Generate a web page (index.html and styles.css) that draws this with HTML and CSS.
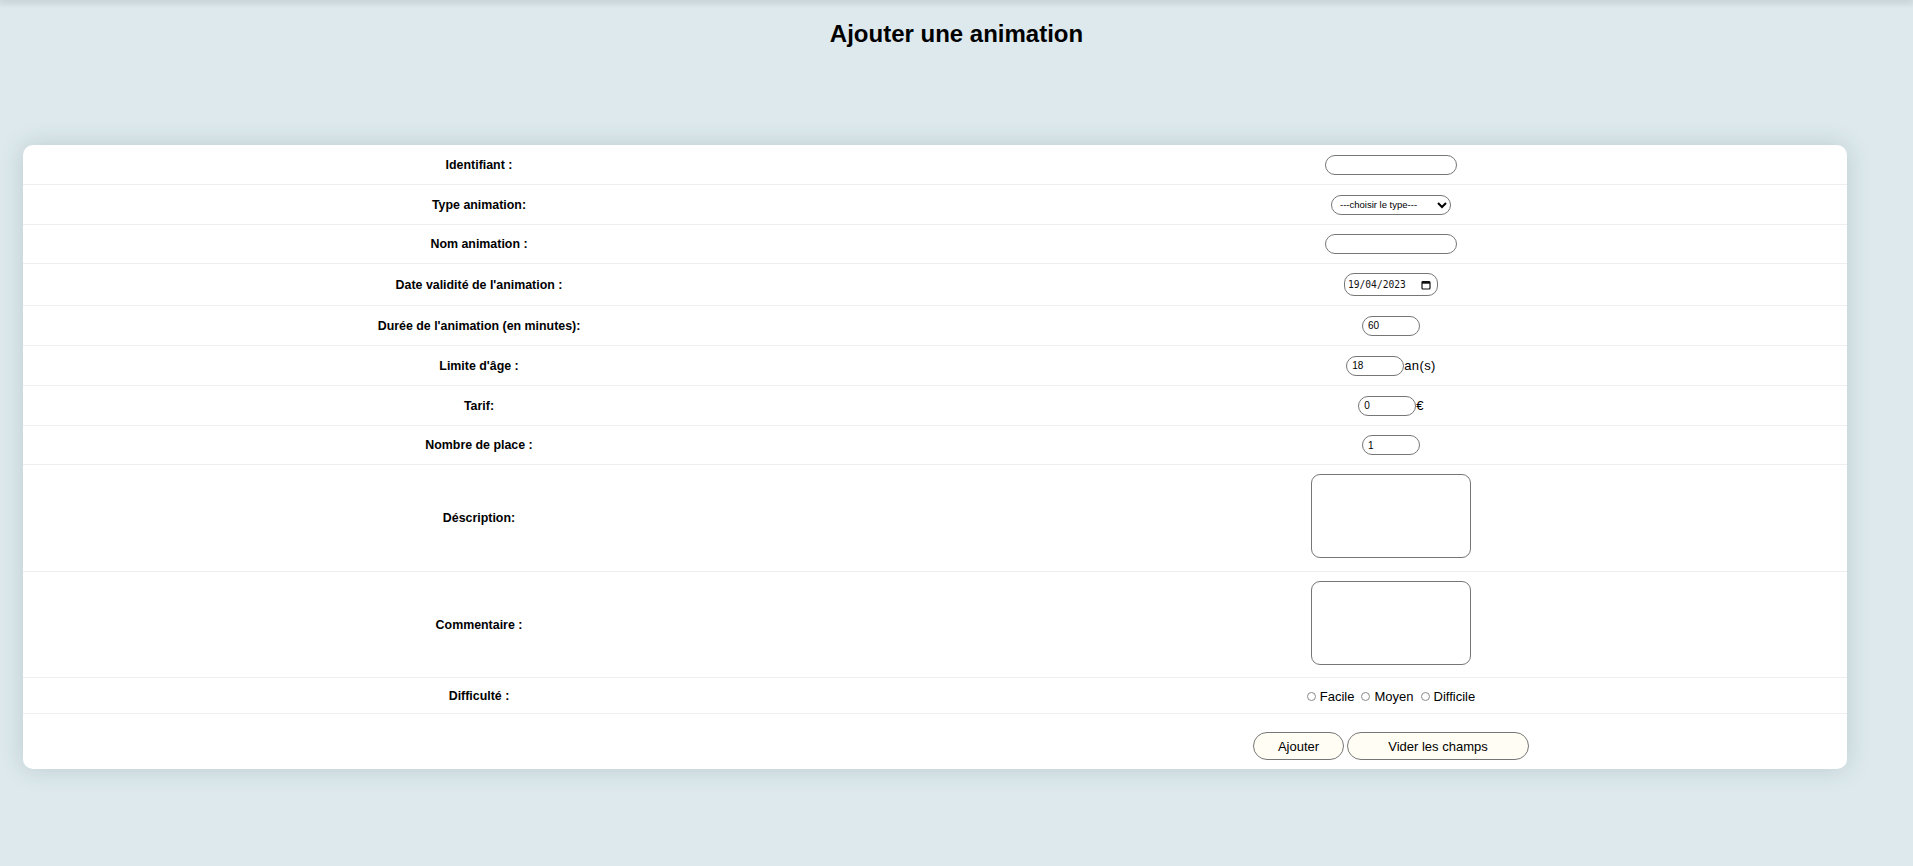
FILE: index.html
```html
<!DOCTYPE html>
<html lang="fr">
<head>
<meta charset="utf-8">
<title>Ajouter une animation</title>
<link rel="stylesheet" href="styles.css">
</head>
<body>
<div class="topbar"></div>
<h1 class="title">Ajouter une animation</h1>
<form class="card">
  <div class="row h40"><label class="lbl">Identifiant :</label><div class="field"><input class="txt" type="text"></div></div>
  <div class="row h40"><label class="lbl">Type animation:</label><div class="field"><select class="sel"><option>---choisir le type---</option></select></div></div>
  <div class="row h39"><label class="lbl">Nom animation :</label><div class="field"><input class="txt" type="text"></div></div>
  <div class="row h42"><label class="lbl">Date validité de l'animation :</label><div class="field"><span class="date"><input class="date-in" type="text" value="19/04/2023"><svg class="cal" width="10" height="10" viewBox="0 0 10 10"><rect x="1" y="1.5" width="8" height="7.5" rx="1" fill="none" stroke="#111" stroke-width="1.2"/><rect x="1" y="1.5" width="8" height="2.2" fill="#111"/></svg></span></div></div>
  <div class="row h40"><label class="lbl">Durée de l'animation (en minutes):</label><div class="field"><input class="num" type="text" value="60"></div></div>
  <div class="row h40"><label class="lbl">Limite d'âge :</label><div class="field"><input class="num" type="text" value="18"><span class="unit">an(s)</span></div></div>
  <div class="row h40"><label class="lbl">Tarif:</label><div class="field"><input class="num" type="text" value="0"><span class="unit">€</span></div></div>
  <div class="row h39"><label class="lbl">Nombre de place :</label><div class="field"><input class="num" type="text" value="1"></div></div>
  <div class="row h107"><label class="lbl">Déscription:</label><div class="field top"><textarea class="area"></textarea></div></div>
  <div class="row h106"><label class="lbl">Commentaire :</label><div class="field top"><textarea class="area"></textarea></div></div>
  <div class="row h36"><label class="lbl">Difficulté :</label><div class="field radios"><label class="opt"><input class="rad" type="radio" name="d">Facile</label><label class="opt"><input class="rad" type="radio" name="d">Moyen</label><label class="opt"><input class="rad" type="radio" name="d">Difficile</label></div></div>
  <div class="row last"><div></div><div class="field btns"><button class="btn b1" type="submit">Ajouter</button><button class="btn b2" type="reset">Vider les champs</button></div></div>
</form>
</body>
</html>
```
FILE: styles.css
```css
html, body {
  margin: 0;
  padding: 0;
}
body {
  background: #dde9ed;
  font-family: "Liberation Sans", Arial, sans-serif;
  color: #000;
  min-height: 866px;
}
.topbar {
  height: 0;
  box-shadow: 0 0 7px 2px rgba(0, 0, 0, 0.18);
}
.title {
  margin: 20px 0 0;
  font-size: 24px;
  line-height: 28px;
  font-weight: bold;
  text-align: center;
}
.card {
  margin: 97px 0 0 23px;
  width: 1824px;
  background: #fff;
  border-radius: 10px;
  box-shadow: 0 0 24px rgba(40, 70, 80, 0.18);
  overflow: hidden;
}
.row {
  display: grid;
  grid-template-columns: 1fr 1fr;
  align-items: center;
  border-bottom: 1px solid #eeeeee;
  box-sizing: border-box;
}
.h36 { height: 36px; }
.h39 { height: 39px; }
.h40 { height: 40px; }
.h42 { height: 42px; }
.h106 { height: 106px; }
.h107 { height: 107px; }
.row.last {
  height: 55px;
  border-bottom: none;
  align-items: start;
  padding-top: 18px;
}
.lbl {
  text-align: center;
  font-weight: bold;
  font-size: 12.4px;
}
.field {
  display: flex;
  justify-content: center;
  align-items: center;
}
.field.top {
  align-self: start;
  padding-top: 9px;
}
.txt, .num, .sel, .date, .area {
  box-sizing: border-box;
  border: 1px solid #767676;
  border-radius: 10px;
  background: #fff;
  margin: 0;
  font-family: "Liberation Sans", Arial, sans-serif;
  color: #000;
}
.txt {
  width: 132px;
  height: 20px;
  padding: 0 6px;
  font-size: 11px;
}
.num {
  width: 58px;
  height: 20px;
  padding: 0 5px;
  font-size: 10px;
}
.sel {
  width: 120px;
  height: 20px;
  font-size: 9.5px;
  padding: 0 2px 0 4px;
}
.date {
  width: 94px;
  height: 23px;
  display: inline-flex;
  align-items: center;
  padding: 0 6px 0 3px;
}
.date-in {
  border: none;
  outline: none;
  width: 70px;
  padding: 0;
  margin: 0;
  font-family: "DejaVu Sans Mono", "Liberation Mono", monospace;
  font-size: 9.6px;
  color: #111;
  background: transparent;
}
.cal {
  margin-left: auto;
  flex: none;
}
.unit {
  font-size: 13px;
  letter-spacing: 0.4px;
}
.area {
  width: 160px;
  height: 84px;
  resize: none;
  border-radius: 9px;
  display: block;
}
.radios {
  font-size: 13px;
  padding-top: 2px;
}
.opt {
  display: inline-flex;
  align-items: center;
  margin-right: 7px;
}
.opt:last-child { margin-right: 0; }
.rad {
  -webkit-appearance: none;
  appearance: none;
  width: 9px;
  height: 9px;
  margin: 0 4px 0 0;
  border: 1px solid #8a8a8a;
  border-radius: 50%;
  background: #fff;
  box-sizing: border-box;
}
.btns {
  gap: 3px;
}
.btn {
  height: 28px;
  border: 1px solid #767676;
  border-radius: 14px;
  background: #fffdf4;
  font-family: "Liberation Sans", Arial, sans-serif;
  font-size: 13px;
  color: #000;
  padding: 0;
  box-sizing: border-box;
}
.b1 { width: 91px; }
.b2 { width: 182px; }
```
